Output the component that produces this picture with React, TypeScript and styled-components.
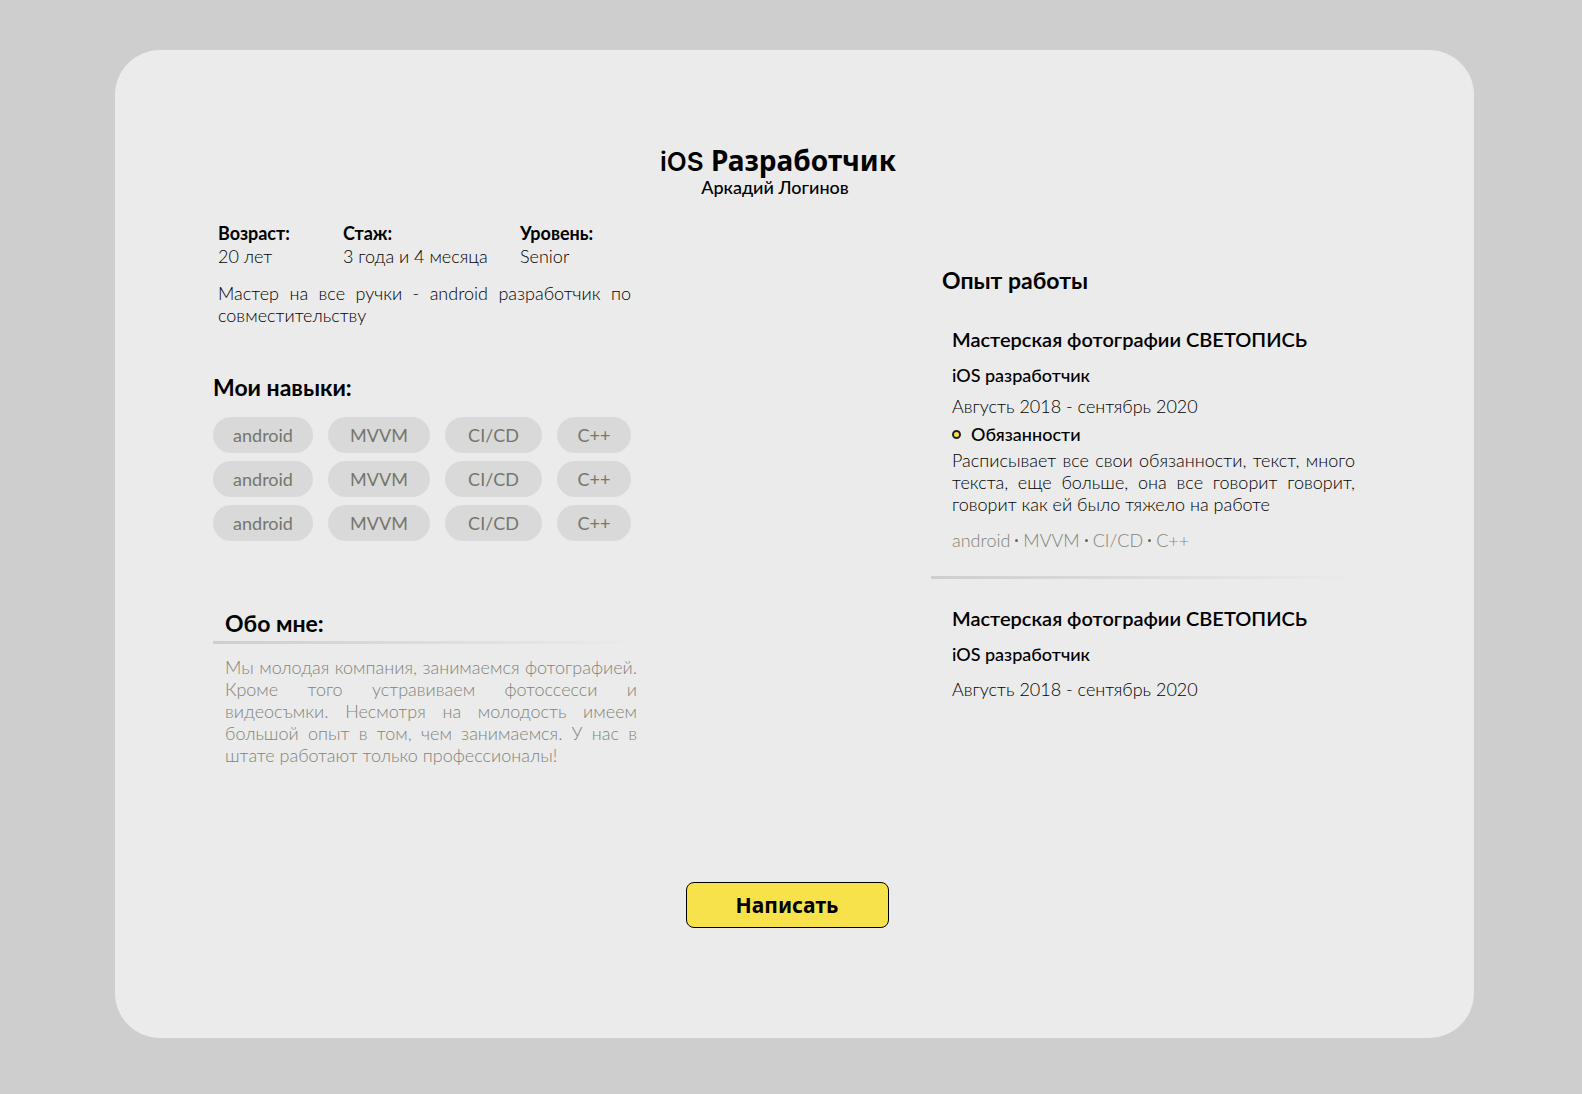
import React from "react";
import styled, { createGlobalStyle } from "styled-components";

const GlobalStyle = createGlobalStyle`
  *, *::before, *::after { box-sizing: border-box; }
  body {
    margin: 0;
    background: #cecece;
    color: #000;
    font-family: Lato, "Noto Sans", sans-serif;
    font-size: 18px;
    line-height: 22px;
  }
  h1, h2, h3, h4, p, ul, dl, dt, dd { margin: 0; padding: 0; }
  ul { list-style: none; }
`;

const Page = styled.div`
  display: flex;
  min-height: 100vh;
  padding: 50px 108px 56px 115px;
`;

const Card = styled.main`
  flex: 1;
  display: flex;
  flex-direction: column;
  padding: 94px 113px 110px 98px;
  border-radius: 45px;
  background: #ebebeb;
`;

const Header = styled.header`
  display: flex;
  flex-direction: column;
  align-items: center;
  padding-right: 18px;
`;

const Title = styled.h1`
  font-family: "Noto Sans", sans-serif;
  font-size: 28px;
  line-height: 32px;
  font-weight: 700;
`;

const Platform = styled.span`
  font-family: Inter, sans-serif;
  font-size: 26px;
  line-height: 1;
  font-weight: 600;
`;

const Person = styled.p`
  padding-right: 6px;
  font-weight: 500;
`;

const Columns = styled.div`
  display: flex;
  justify-content: space-between;
  gap: 40px;
  margin-top: 24px;
`;

const Profile = styled.div`
  flex: 0 1 427px;
`;

const Experience = styled.section`
  flex: 0 1 430px;
  padding-top: 44px;
`;

const Intro = styled.section`
  padding: 0 9px 0 5px;
`;

const Facts = styled.dl`
  display: grid;
  grid-template-columns: 125px 177px auto;
  line-height: 23px;
`;

const FactName = styled.dt`
  font-weight: 700;
`;

const FactValue = styled.dd`
  font-weight: 300;
`;

const Text = styled.p<{ $muted?: boolean }>`
  font-weight: 300;
  color: ${(p) => (p.$muted ? "#83837a" : "#000")};
  text-align: justify;
`;

const Summary = styled(Text)`
  margin-top: 14px;
`;

const Heading = styled.h2`
  font-size: 23px;
  line-height: 28px;
  font-weight: 700;
`;

const Skills = styled.section`
  margin-top: 47px;
`;

const Chips = styled.ul`
  display: grid;
  grid-template-columns: 100px 102px 97px 74px;
  gap: 8px 15px;
  margin-top: 16px;
`;

const Chip = styled.li`
  display: flex;
  align-items: center;
  justify-content: center;
  height: 36px;
  border-radius: 18px;
  background: #d9d9d9;
  color: #76766c;
  font-weight: 400;
`;

const About = styled.section`
  margin-top: 68px;
`;

const Inset = styled.div`
  padding: 0 3px 0 12px;
`;

const Divider = styled.hr`
  height: 3px;
  margin: 0;
  border: 0;
  background: linear-gradient(90deg, #cecece, #ebebeb);
`;

const AboutDivider = styled(Divider)`
  margin: 4px 0 12px;
`;

const ExperienceHeading = styled(Heading)`
  margin-bottom: 33px;
  padding-left: 11px;
`;

const JobDivider = styled(Divider)`
  margin: 25px 0 27px;
`;

const Job = styled.article`
  padding: 0 6px 0 21px;
`;

const Company = styled.h3`
  font-size: 20px;
  line-height: 24px;
  font-weight: 600;
`;

const Role = styled.h4`
  margin-top: 13px;
  font-size: 18px;
  font-weight: 500;
`;

const Period = styled.p<{ $gap: number }>`
  margin-top: ${(p) => p.$gap}px;
  font-weight: 300;
`;

const Duties = styled.h4`
  display: flex;
  align-items: center;
  gap: 10px;
  margin: 6px 0 4px;
  font-size: 18px;
  font-weight: 500;
`;

const Bullet = styled.span`
  width: 9px;
  height: 9px;
  border: 2px solid #222;
  border-radius: 50%;
  background: #f8e24b;
`;

const Tags = styled.ul`
  display: flex;
  margin-top: 14px;
  color: #83837a;
  font-weight: 300;
`;

const Tag = styled.li`
  display: flex;
  align-items: center;

  & + &::before {
    content: "";
    width: 3px;
    height: 3px;
    margin: 0 5px;
    border-radius: 50%;
    background: #6b6640;
  }
`;

const Contact = styled.button`
  align-self: center;
  width: 203px;
  height: 46px;
  margin-top: 116px;
  border: 1px solid #000;
  border-radius: 8px;
  background: #f8e24b;
  color: #000;
  font-family: "Noto Sans", sans-serif;
  font-size: 21px;
  line-height: 28px;
  font-weight: 700;
  cursor: pointer;
`;

const skills = ["android", "MVVM", "CI/CD", "C++"];
const skillRows = [skills, skills, skills];

export default function App() {
  return (
    <>
      <GlobalStyle />
      <Page>
        <Card>
          <Header>
            <Title>
              <Platform>iOS</Platform> Разработчик
            </Title>
            <Person>Аркадий Логинов</Person>
          </Header>

          <Columns>
            <Profile>
              <Intro>
                <Facts>
                  <FactName>Возраст:</FactName>
                  <FactName>Стаж:</FactName>
                  <FactName>Уровень:</FactName>
                  <FactValue>20 лет</FactValue>
                  <FactValue>3 года и 4 месяца</FactValue>
                  <FactValue>Senior</FactValue>
                </Facts>
                <Summary>
                  Мастер на все ручки - android разработчик по совместительству
                </Summary>
              </Intro>

              <Skills>
                <Heading>Мои навыки:</Heading>
                <Chips>
                  {skillRows.map((row, i) =>
                    row.map((skill) => <Chip key={`${i}-${skill}`}>{skill}</Chip>)
                  )}
                </Chips>
              </Skills>

              <About>
                <Inset>
                  <Heading>Обо мне:</Heading>
                </Inset>
                <AboutDivider />
                <Inset>
                  <Text $muted>
                    Мы молодая компания, занимаемся фотографией. Кроме того
                    устравиваем фотоссесси и видеосъмки. Несмотря на молодость
                    имеем большой опыт в том, чем занимаемся. У нас в штате
                    работают только профессионалы!
                  </Text>
                </Inset>
              </About>
            </Profile>

            <Experience>
              <ExperienceHeading>Опыт работы</ExperienceHeading>
              <Job>
                <Company>Мастерская фотографии СВЕТОПИСЬ</Company>
                <Role>iOS разработчик</Role>
                <Period $gap={9}>Августь 2018 - сентябрь 2020</Period>
                <Duties>
                  <Bullet />
                  Обязанности
                </Duties>
                <Text>
                  Расписывает все свои обязанности, текст, много текста, еще
                  больше, она все говорит говорит, говорит как ей было тяжело на
                  работе
                </Text>
                <Tags>
                  {skills.map((skill) => (
                    <Tag key={skill}>{skill}</Tag>
                  ))}
                </Tags>
              </Job>
              <JobDivider />
              <Job>
                <Company>Мастерская фотографии СВЕТОПИСЬ</Company>
                <Role>iOS разработчик</Role>
                <Period $gap={13}>Августь 2018 - сентябрь 2020</Period>
              </Job>
            </Experience>
          </Columns>

          <Contact type="button">Написать</Contact>
        </Card>
      </Page>
    </>
  );
}
